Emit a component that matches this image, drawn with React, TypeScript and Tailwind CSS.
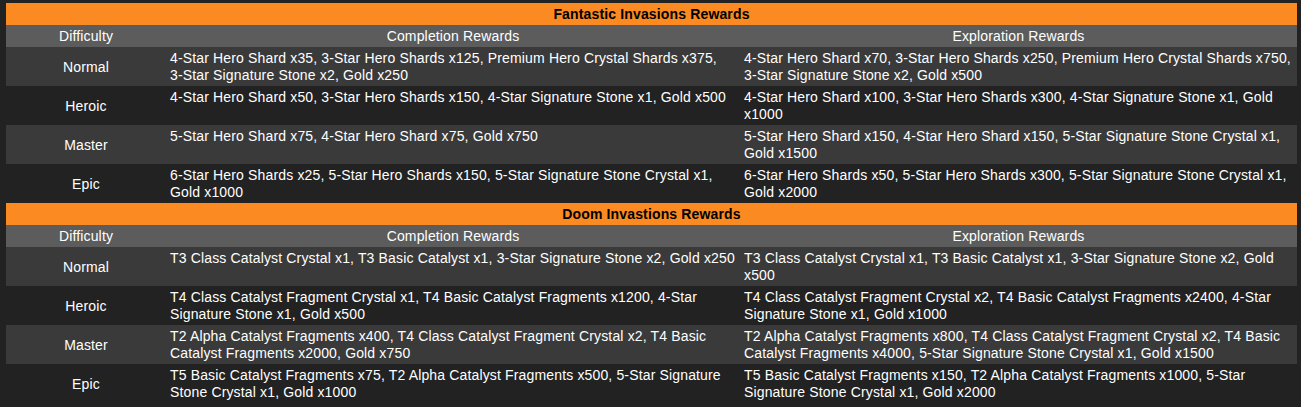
const sections = [
  {
    title: "Fantastic Invasions Rewards",
    rows: [
      {
        level: "Normal",
        completion:
          "4-Star Hero Shard x35, 3-Star Hero Shards x125, Premium Hero Crystal Shards x375, 3-Star Signature Stone x2, Gold x250",
        exploration:
          "4-Star Hero Shard x70, 3-Star Hero Shards x250, Premium Hero Crystal Shards x750, 3-Star Signature Stone x2, Gold x500",
      },
      {
        level: "Heroic",
        completion: "4-Star Hero Shard x50, 3-Star Hero Shards x150, 4-Star Signature Stone x1, Gold x500",
        exploration: "4-Star Hero Shard x100, 3-Star Hero Shards x300, 4-Star Signature Stone x1, Gold x1000",
      },
      {
        level: "Master",
        completion: "5-Star Hero Shard x75, 4-Star Hero Shard x75, Gold x750",
        exploration: "5-Star Hero Shard x150, 4-Star Hero Shard x150, 5-Star Signature Stone Crystal x1, Gold x1500",
      },
      {
        level: "Epic",
        completion: "6-Star Hero Shards x25, 5-Star Hero Shards x150, 5-Star Signature Stone Crystal x1, Gold x1000",
        exploration: "6-Star Hero Shards x50, 5-Star Hero Shards x300, 5-Star Signature Stone Crystal x1, Gold x2000",
      },
    ],
  },
  {
    title: "Doom Invastions Rewards",
    rows: [
      {
        level: "Normal",
        completion: "T3 Class Catalyst Crystal x1, T3 Basic Catalyst x1, 3-Star Signature Stone x2, Gold x250",
        exploration: "T3 Class Catalyst Crystal x1, T3 Basic Catalyst x1, 3-Star Signature Stone x2, Gold x500",
      },
      {
        level: "Heroic",
        completion:
          "T4 Class Catalyst Fragment Crystal x1, T4 Basic Catalyst Fragments x1200, 4-Star Signature Stone x1, Gold x500",
        exploration:
          "T4 Class Catalyst Fragment Crystal x2, T4 Basic Catalyst Fragments x2400, 4-Star Signature Stone x1, Gold x1000",
      },
      {
        level: "Master",
        completion:
          "T2 Alpha Catalyst Fragments x400, T4 Class Catalyst Fragment Crystal x2, T4 Basic Catalyst Fragments x2000, Gold x750",
        exploration:
          "T2 Alpha Catalyst Fragments x800, T4 Class Catalyst Fragment Crystal x2, T4 Basic Catalyst Fragments x4000, 5-Star Signature Stone Crystal x1, Gold x1500",
      },
      {
        level: "Epic",
        completion:
          "T5 Basic Catalyst Fragments x75, T2 Alpha Catalyst Fragments x500, 5-Star Signature Stone Crystal x1, Gold x1000",
        exploration:
          "T5 Basic Catalyst Fragments x150, T2 Alpha Catalyst Fragments x1000, 5-Star Signature Stone Crystal x1, Gold x2000",
      },
    ],
  },
];

// keep "3-Star" etc. from breaking at the hyphen
function Words({ text }: { text: string }) {
  const words = text.split(" ");
  return (
    <>
      {words.map((w, i) => (
        <span key={i}>
          <span className="whitespace-nowrap">{w}</span>
          {i < words.length - 1 ? " " : ""}
        </span>
      ))}
    </>
  );
}

export default function App() {
  return (
    <div className="min-h-[407px] w-[1301px] bg-[#222222] pl-[6px] pt-[3px] font-['Liberation_Sans',Arial,sans-serif] text-[14px] leading-[17px] tracking-[0.15px] text-white">
      <div className="w-[1291px]">
        {sections.map((section) => (
          <div key={section.title}>
            {/* Section title */}
            <div className="flex h-[22px] items-center justify-center bg-[#fb8a22] pt-[1px] font-bold text-black">
              {section.title}
            </div>

            {/* Column headers */}
            <div className="grid h-[22px] grid-cols-[160px_574px_1fr] items-center bg-[#5c5c5c] pt-[1px]">
              <div className="text-center">Difficulty</div>
              <div className="text-center">Completion Rewards</div>
              <div className="text-center">Exploration Rewards</div>
            </div>

            {/* Rows */}
            {section.rows.map((row, i) => (
              <div
                key={row.level}
                className={
                  "grid h-[39px] grid-cols-[160px_574px_1fr] items-start " +
                  (i % 2 === 0 ? "bg-[#3a3a3a]" : "bg-[#222222]")
                }
              >
                <div className="self-center pt-[1px] text-center">{row.level}</div>
                <div className="pl-[4px] pr-[4px] pt-[3px]">
                  <Words text={row.completion} />
                </div>
                <div className="pl-[4px] pr-[4px] pt-[3px]">
                  <Words text={row.exploration} />
                </div>
              </div>
            ))}
          </div>
        ))}
      </div>
    </div>
  );
}
